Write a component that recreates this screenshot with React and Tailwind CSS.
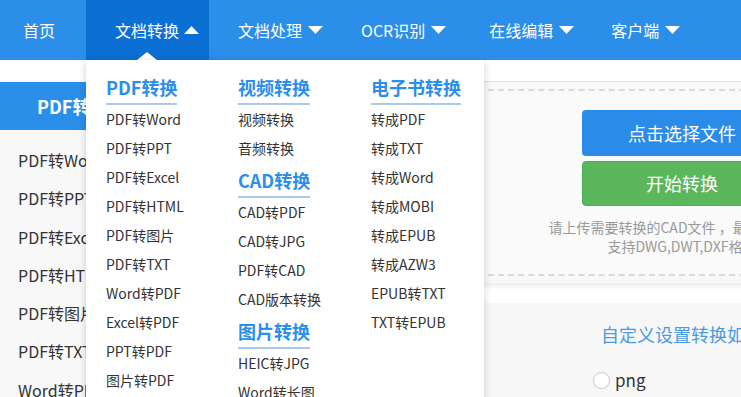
import React from 'react';

const Caret = ({ up }) => (
  <svg width="15" height="8" viewBox="0 0 15 8" className="shrink-0">
    {up ? <polygon points="0,8 7.5,0 15,8" fill="#fff" /> : <polygon points="0,0 15,0 7.5,8" fill="#fff" />}
  </svg>
);

const sideItems = ['PDF转Word', 'PDF转PPT', 'PDF转Excel', 'PDF转HTML', 'PDF转图片', 'PDF转TXT', 'Word转PDF', 'Excel转PDF'];

const menu = [
  [
    { head: 'PDF转换', items: ['PDF转Word', 'PDF转PPT', 'PDF转Excel', 'PDF转HTML', 'PDF转图片', 'PDF转TXT', 'Word转PDF', 'Excel转PDF', 'PPT转PDF', '图片转PDF'] },
  ],
  [
    { head: '视频转换', items: ['视频转换', '音频转换'] },
    { head: 'CAD转换', items: ['CAD转PDF', 'CAD转JPG', 'PDF转CAD', 'CAD版本转换'] },
    { head: '图片转换', items: ['HEIC转JPG', 'Word转长图'] },
  ],
  [
    { head: '电子书转换', items: ['转成PDF', '转成TXT', '转成Word', '转成MOBI', '转成EPUB', '转成AZW3', 'EPUB转TXT', 'TXT转EPUB'] },
  ],
];

export default function App() {
  return (
    <div
      className="relative w-full h-[397px] overflow-hidden bg-white"
      style={{ fontFamily: '"Noto Sans CJK SC", "Noto Sans", sans-serif' }}
    >
      {/* top nav */}
      <header className="h-[60px] bg-[#2b8ee9] flex items-center text-white text-[16px] w-[1200px]">
        <div className="w-[86px] h-full flex items-center pl-[23px]">首页</div>
        <div className="relative w-[123px] h-full flex items-center pl-[29px] bg-[#0b6fd3]">
          <span>文档转换</span>
          <span className="ml-[5px]"><Caret up /></span>
          <div className="absolute bottom-0 left-[51px] w-0 h-0 border-l-[10px] border-r-[10px] border-b-[8px] border-l-transparent border-r-transparent border-b-white" />
        </div>
        <div className="ml-[29px] flex items-center gap-[6px]"><span>文档处理</span><Caret /></div>
        <div className="ml-[38px] flex items-center gap-[6px]"><span>OCR识别</span><Caret /></div>
        <div className="ml-[43px] flex items-center gap-[6px]"><span>在线编辑</span><Caret /></div>
        <div className="ml-[37px] flex items-center gap-[6px]"><span>客户端</span><Caret /></div>
      </header>

      <div className="flex w-[1200px]">
        {/* sidebar */}
        <aside className="w-[200px] shrink-0 mt-[22px] bg-[#f8f8f8] h-[400px]">
          <div className="h-[48px] bg-[#2b8ee9] pl-[37px] flex items-center text-white text-[18px] font-bold">PDF转换</div>
          <ul className="pt-[11px]">
            {sideItems.map((s) => (
              <li key={s} className="pl-[18px] leading-[38.3px] text-[16px] text-[#333]">{s}</li>
            ))}
          </ul>
        </aside>

        {/* main */}
        <main className="w-[884px] shrink-0 ml-[40px]">
          <div className="mt-[21px] border-t border-[#e2e2e2] bg-[#f8f8f8] p-[7px] shadow-[0_3px_5px_rgba(0,0,0,0.08)]">
            <div className="border-2 border-dashed border-[#dadada] bg-[#fafafa] flex flex-col items-center pt-[19px] pb-[18px]">
              <button className="w-[200px] h-[46px] rounded-[4px] bg-[#2b8be8] text-white text-[18px]">点击选择文件</button>
              <button className="mt-[5px] w-[200px] h-[45px] rounded-[4px] bg-[#5cb65c] border border-[#4fa94f] text-white text-[18px]">开始转换</button>
              <p className="mt-[12px] text-[14px] leading-[19px] text-[#999] text-center">
                请上传需要转换的CAD文件 ，最大支持50M
                <br />
                支持DWG,DWT,DXF格式
              </p>
            </div>
          </div>

          <div className="mt-[20px] bg-[#f7f7f7] h-[120px] pt-[19px]">
            <p className="text-center text-[18px] leading-[24px] text-[#4a9be2]">自定义设置转换如下</p>
            <div className="mt-[22px] pl-[353px] flex items-center">
              <span className="w-[17px] h-[17px] rounded-full border border-[#c8c8c8] bg-white" />
              <span className="ml-[5px] text-[17px] leading-[24px] text-[#333]">png</span>
            </div>
          </div>
        </main>
      </div>

      {/* dropdown menu */}
      <div className="absolute left-[86px] top-[60px] w-[398px] bg-white shadow-[0_2px_8px_rgba(0,0,0,0.18)] pt-[10px] pl-[20px] pb-[20px] grid grid-cols-[132px_133px_1fr]">
        {menu.map((col, i) => (
          <div key={i}>
            {col.map((g) => (
              <div key={g.head}>
                <div className="pt-[5px]">
                  <span className="inline-block text-[18px] leading-[24px] pb-[4px] font-bold text-[#2b8ee9] border-b-2 border-[#a8c8ee]">{g.head}</span>
                </div>
                {g.items.map((it) => (
                  <div key={it} className="text-[14px] leading-[29px] text-[#333]">{it}</div>
                ))}
              </div>
            ))}
          </div>
        ))}
      </div>
    </div>
  );
}
